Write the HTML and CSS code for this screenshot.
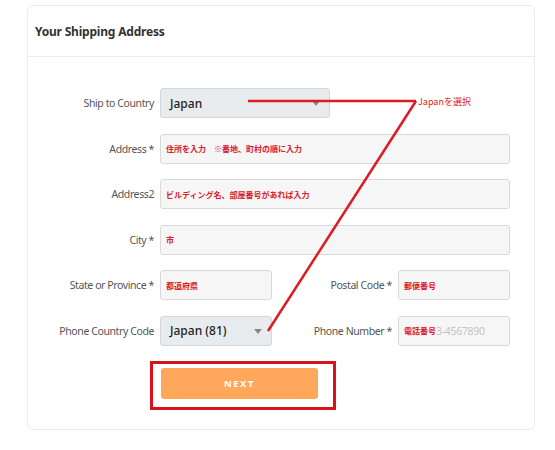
FILE: index.html
```html
<!DOCTYPE html>
<html lang="ja">
<head>
    <meta charset="UTF-8">
    <meta name="viewport" content="width=device-width, initial-scale=1.0">
    <title>Your Shipping Address</title>
    <link rel="stylesheet" href="styles.css">
</head>
<body>
    <div class="card">
        <div class="card-header">Your Shipping Address</div>
        <div class="form">
            <label class="label">Ship to Country</label>
            <div class="select select-country">Japan<span class="caret"></span></div>

            <label class="label">Address *</label>
            <div class="field span3"><span class="hint">住所を入力　※番地、町村の順に入力</span></div>

            <label class="label">Address2</label>
            <div class="field span3"><span class="hint">ビルディング名、部屋番号があれば入力</span></div>

            <label class="label">City *</label>
            <div class="field span3"><span class="hint">市</span></div>

            <label class="label">State or Province *</label>
            <div class="field"><span class="hint">都道府県</span></div>
            <label class="label">Postal Code *</label>
            <div class="field"><span class="hint">郵便番号</span></div>

            <label class="label">Phone Country Code</label>
            <div class="select">Japan (81)<span class="caret"></span></div>
            <label class="label">Phone Number *</label>
            <div class="field"><span class="hint">電話番号</span><span class="placeholder">3-4567890</span></div>

            <div class="next-box">
                <button class="next-btn">NEXT</button>
            </div>
        </div>
    </div>

    <!-- annotation overlay -->
    <svg class="marks" width="555" height="450">
        <line x1="248" y1="101" x2="416" y2="101" stroke="#dc1b22" stroke-width="2.5"/>
        <line x1="416" y1="101" x2="268" y2="331" stroke="#dc1b22" stroke-width="2.5"/>
    </svg>
    <span class="mark-text">Japanを選択</span>
</body>
</html>
```

FILE: styles.css
```css
body {
    margin: 0;
    font-family: "Noto Sans", "Noto Sans CJK JP", sans-serif;
    background-color: #fff;
    color: #555;
}

.card {
    margin: 5px 0 0 27px;
    width: 508px;
    height: 425px;
    box-sizing: border-box;
    border: 1px solid #ebebeb;
    border-radius: 6px;
}

.card-header {
    height: 51px;
    box-sizing: border-box;
    padding: 17px 0 0 7px;
    border-bottom: 1px solid #ececec;
    font-size: 12px;
    font-weight: bold;
    color: #333;
    letter-spacing: -0.2px;
}

.form {
    display: grid;
    grid-template-columns: 126px 112px 114px 112px;
    column-gap: 6px;
    row-gap: 15.5px;
    grid-auto-rows: 30px;
    padding-top: 31px;
}

.label {
    display: flex;
    align-items: center;
    justify-content: flex-end;
    font-size: 10.5px;
    color: #555;
    letter-spacing: -0.4px;
    white-space: nowrap;
}

.span3 {
    grid-column: span 3;
}

.field {
    display: flex;
    align-items: center;
    padding-left: 5px;
    box-sizing: border-box;
    background-color: #f6f6f6;
    border: 1px solid #d9d9d9;
    border-radius: 3px;
}

.hint {
    font-family: "Noto Sans CJK JP", sans-serif;
    font-size: 8px;
    font-weight: bold;
    color: #d9202a;
}

.placeholder {
    font-size: 10.5px;
    color: #c4c4c4;
    letter-spacing: -0.3px;
}

.select {
    position: relative;
    display: flex;
    align-items: center;
    padding-left: 9px;
    box-sizing: border-box;
    background-color: #e9ecef;
    border: 1px solid #d3d7db;
    border-radius: 3px;
    font-size: 12px;
    font-weight: 500;
    color: #222;
}

.select-country {
    grid-column: span 3;
    width: 170px;
}

.caret {
    position: absolute;
    right: 9px;
    top: 12px;
    border-left: 4px solid transparent;
    border-right: 4px solid transparent;
    border-top: 5px solid #888;
}

.next-box {
    grid-column: 2 / span 2;
    margin-left: -10px;
    width: 186px;
    height: 49px;
    box-sizing: border-box;
    border: 3px solid #d7141c;
    padding: 4px 0 0 8px;
}

.next-btn {
    width: 157px;
    height: 31px;
    border: none;
    border-radius: 3px;
    background-color: #ffa85c;
    color: #fff;
    font-family: "Noto Sans", sans-serif;
    font-size: 9.5px;
    font-weight: bold;
    letter-spacing: 1.5px;
}

.marks {
    position: absolute;
    left: 0;
    top: 0;
}

.mark-text {
    position: absolute;
    left: 418px;
    top: 95px;
    font-family: "Noto Sans CJK JP", sans-serif;
    font-size: 9px;
    color: #dc1b22;
}
```
